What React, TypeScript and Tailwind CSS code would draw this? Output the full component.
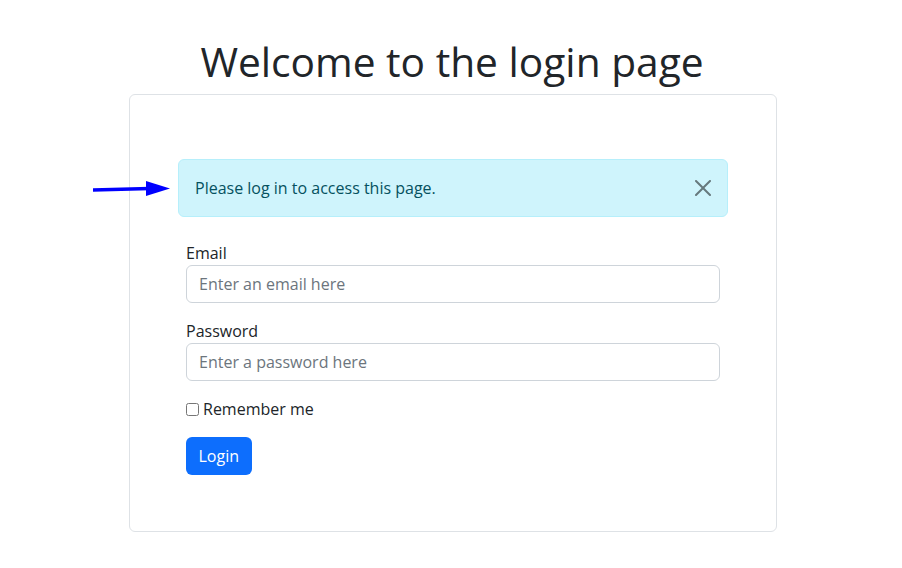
import { useState } from "react";

function CloseIcon() {
  return (
    <svg viewBox="0 0 16 16" className="h-4 w-4" fill="currentColor">
      <path d="M.293.293a1 1 0 0 1 1.414 0L8 6.586 14.293.293a1 1 0 1 1 1.414 1.414L9.414 8l6.293 6.293a1 1 0 0 1-1.414 1.414L8 9.414l-6.293 6.293a1 1 0 0 1-1.414-1.414L6.586 8 .293 1.707a1 1 0 0 1 0-1.414" />
    </svg>
  );
}

export default function App() {
  const [showAlert, setShowAlert] = useState(true);

  return (
    <div className="relative min-h-[568px] bg-white font-['Open_Sans',sans-serif] text-[#212529]">
      {/* pointer arrow */}
      <svg className="absolute left-[90px] top-[178px] h-[22px] w-[84px]" viewBox="0 0 84 22">
        <line x1="3" y1="12" x2="60" y2="10.5" stroke="#0000ff" strokeWidth="3.5" />
        <polygon points="56,3 80,10.5 56,18" fill="#0000ff" />
      </svg>

      <div className="flex flex-col items-center pl-[4px] pt-[37px]">
        <h1 className="mb-[9px] pr-[2px] text-[40.7px] leading-[48px] font-normal">Welcome to the login page</h1>

        <div className="w-[648px] rounded-md border border-[#dee2e6] px-12 pt-16 pb-14">
          {showAlert && (
            <div className="mb-[24px] flex items-center justify-between rounded-md border border-[#b6effb] bg-[#cff4fc] px-4 py-4 text-base leading-6 text-[#055160]">
              <span>Please log in to access this page.</span>
              <button
                className="flex h-6 w-4 items-center justify-center text-black opacity-50"
                onClick={() => setShowAlert(false)}
              >
                <CloseIcon />
              </button>
            </div>
          )}

          <form className="mx-2 flex flex-col text-base leading-6" onSubmit={(e) => e.preventDefault()}>
            <label htmlFor="email">Email</label>
            <input
              id="email"
              type="email"
              placeholder="Enter an email here"
              className="mb-4 h-[38px] rounded-md border border-[#ced4da] px-3 py-1.5 placeholder:text-[#6c757d]"
            />
            <label htmlFor="password">Password</label>
            <input
              id="password"
              type="password"
              placeholder="Enter a password here"
              className="mb-4 h-[38px] rounded-md border border-[#ced4da] px-3 py-1.5 placeholder:text-[#6c757d]"
            />
            <label className="mb-4 flex items-center">
              <input type="checkbox" className="ml-0 mr-1 h-[13px] w-[13px]" />
              Remember me
            </label>
            <div>
              <button className="h-[38px] rounded-md bg-[#0d6efd] px-[12.5px] text-white">Login</button>
            </div>
          </form>
        </div>
      </div>
    </div>
  );
}
